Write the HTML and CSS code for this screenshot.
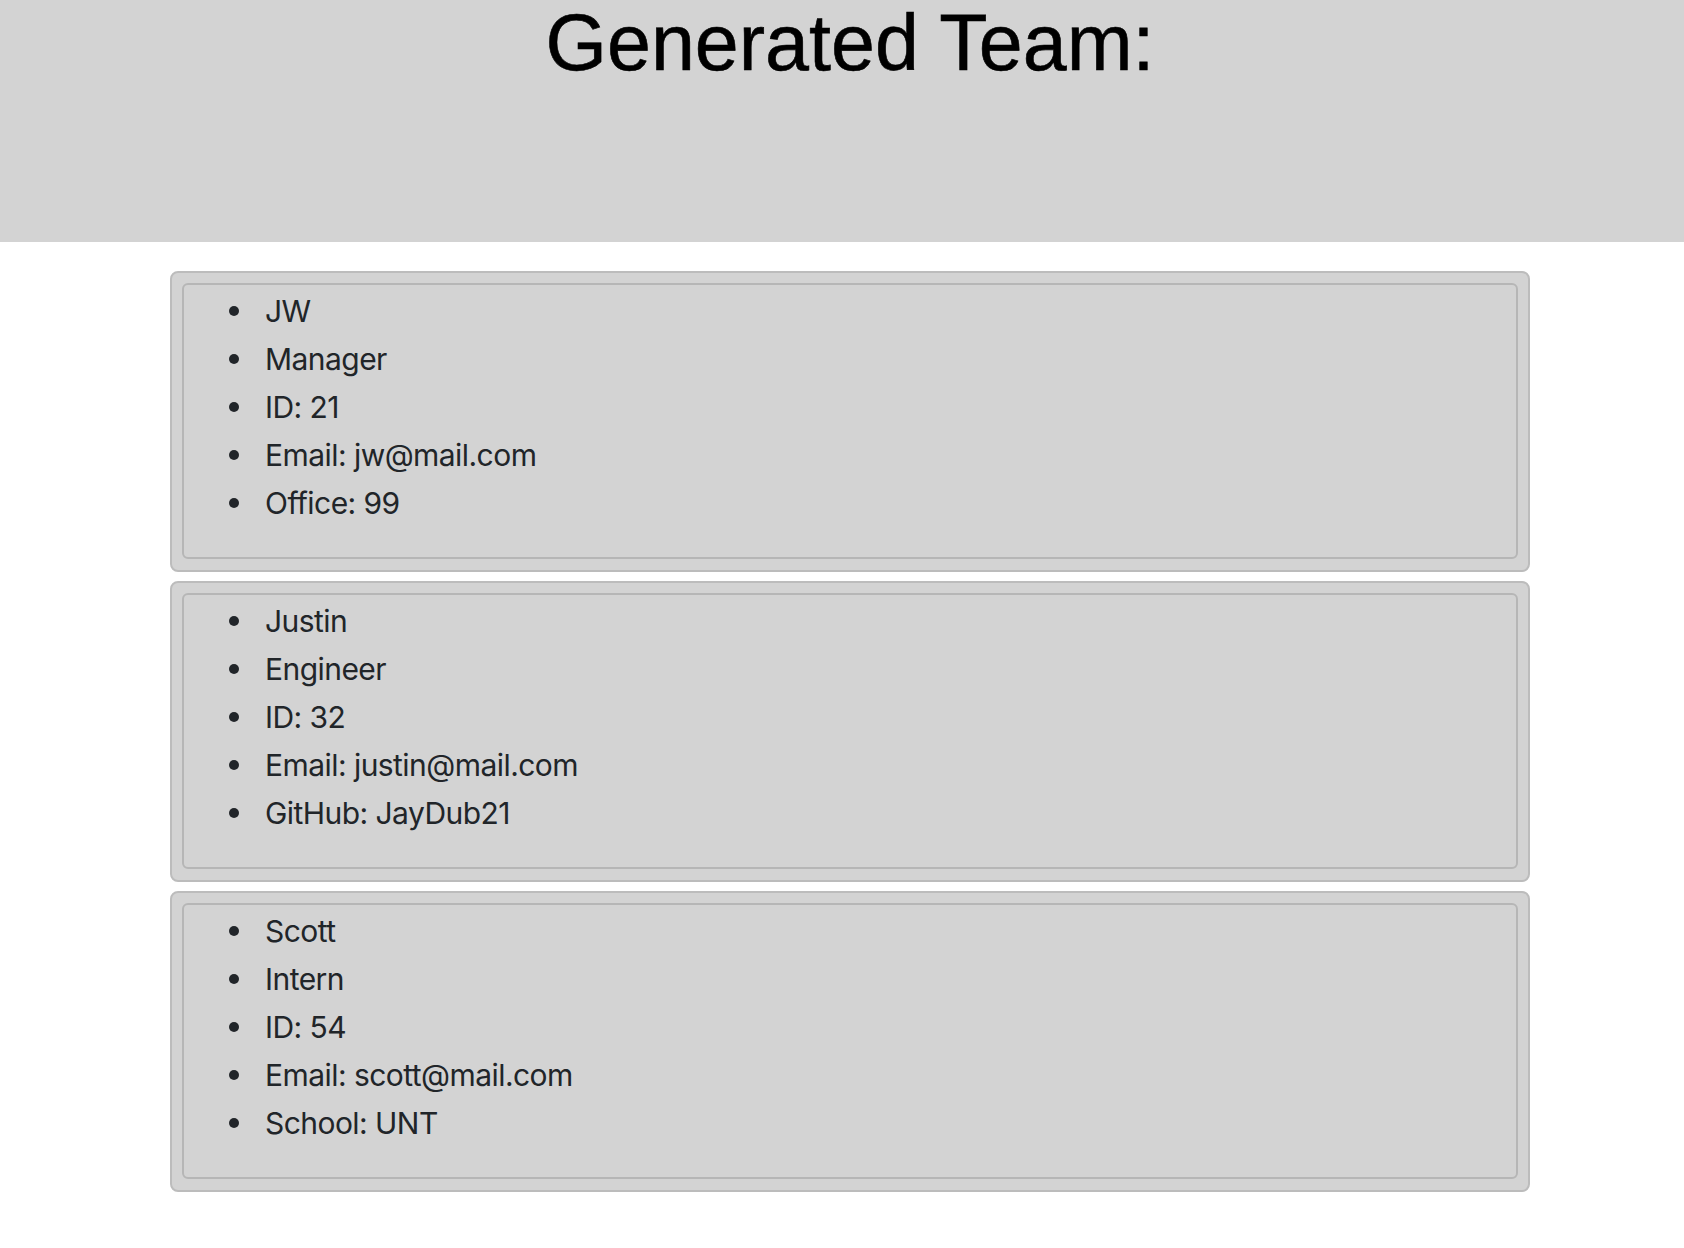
FILE: index.html
```html
<!DOCTYPE html>
<html lang="en">
<head>
<meta charset="utf-8">
<title>Generated Team</title>
<link rel="stylesheet" href="styles.css">
</head>
<body>
<header class="banner">
  <h1 class="banner-title">Generated Team:</h1>
</header>
<main class="team">
  <section class="card">
    <div class="card-inner">
      <ul class="info">
        <li>JW</li>
        <li>Manager</li>
        <li>ID: 21</li>
        <li>Email: jw@mail.com</li>
        <li>Office: 99</li>
      </ul>
    </div>
  </section>
  <section class="card">
    <div class="card-inner">
      <ul class="info">
        <li>Justin</li>
        <li>Engineer</li>
        <li>ID: 32</li>
        <li>Email: justin@mail.com</li>
        <li>GitHub: JayDub21</li>
      </ul>
    </div>
  </section>
  <section class="card">
    <div class="card-inner">
      <ul class="info">
        <li>Scott</li>
        <li>Intern</li>
        <li>ID: 54</li>
        <li>Email: scott@mail.com</li>
        <li>School: UNT</li>
      </ul>
    </div>
  </section>
</main>
</body>
</html>
```
FILE: styles.css
```css
html, body {
  margin: 0;
  padding: 0;
  background: #ffffff;
}

body {
  font-family: Inter, "Liberation Sans", sans-serif;
  color: #212529;
}

.banner {
  background: #d3d3d3;
  height: 242px;
  padding-left: 16px;
  box-sizing: border-box;
}

.banner-title {
  margin: 0;
  padding-top: 3px;
  font-family: "Liberation Sans", Arial, sans-serif;
  font-weight: 400;
  font-size: 79px;
  line-height: 1;
  color: #000000;
  text-align: center;
  -webkit-text-stroke: 0.6px #000000;
}

.team {
  padding: 29px 0 40px 16px;
  display: flex;
  flex-direction: column;
  align-items: center;
  gap: 9px;
}

.card {
  width: 1360px;
  box-sizing: border-box;
  background: #d3d3d3;
  border: 2px solid #bcbcbc;
  border-radius: 8px;
  padding: 10px 10px 11px 10px;
}

.card-inner {
  border: 2px solid #b6b6b6;
  border-radius: 6px;
}

.info {
  list-style: none;
  margin: 0 0 30px 0;
  padding: 2px 0 0 81px;
  font-size: 30px;
  line-height: 48px;
  letter-spacing: -0.55px;
}

.info li {
  display: flex;
  align-items: center;
}

.info li::before {
  content: "";
  flex: none;
  width: 10px;
  height: 10px;
  border-radius: 50%;
  background: #212529;
  margin-left: -36px;
  margin-right: 26px;
}
```
